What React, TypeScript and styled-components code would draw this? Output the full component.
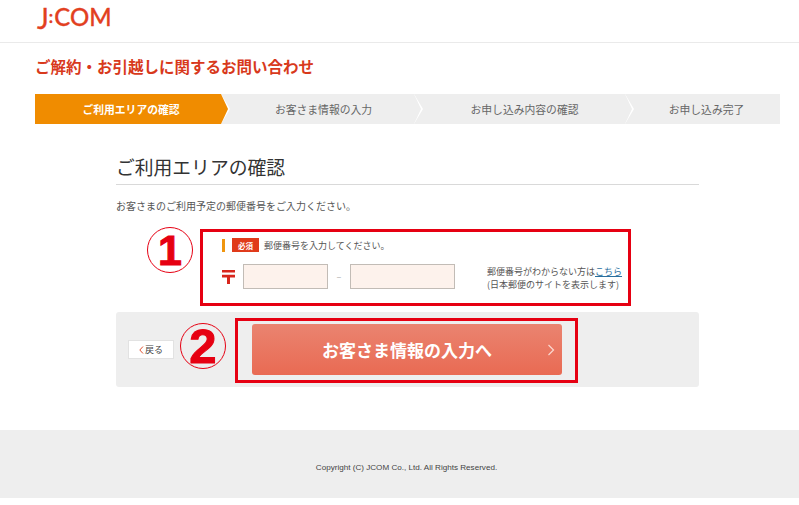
import React from 'react'
import styled, { createGlobalStyle } from 'styled-components'

const GlobalStyle = createGlobalStyle`
  html, body {
    margin: 0;
    padding: 0;
    background: #fff;
    font-family: "Noto Sans CJK JP", "Liberation Sans", sans-serif;
    color: #444;
  }
  * {
    box-sizing: border-box;
  }
`

const Header = styled.header`
  height: 43px;
  padding: 2px 0 0 37px;
  border-bottom: 1px solid #eaeaea;
`

const Logo = styled.div`
  display: flex;
  align-items: flex-start;
  height: 36px;
  color: #e2401f;
  font-family: "Lato", "Liberation Sans", sans-serif;
  font-size: 24px;
  line-height: 30px;
  -webkit-text-stroke: 0.3px #e2401f;
`

const LogoJ = styled.span`
  margin-top: 1px;
  font-size: 28px;
  font-weight: 400;
`

const LogoColon = styled.span`
  margin: 0 1px 0 0;
  font-size: 17px;
  font-weight: 700;
`

const LogoRest = styled.span`
  font-weight: 500;
`

const Title = styled.h1`
  margin: 12px 0 17px 35px;
  height: 22px;
  font-size: 15.5px;
  line-height: 22px;
  font-weight: 700;
  color: #d8391c;
`

const Steps = styled.ol`
  display: grid;
  grid-template-columns: 186px 193px 211px 155px;
  height: 30px;
  margin: 0 19px 0 35px;
  padding: 0;
  list-style: none;
`

const Step = styled.li<{ $active?: boolean; $last?: boolean; $inset: number }>`
  position: relative;
  display: flex;
  align-items: center;
  justify-content: center;
  padding-left: ${({ $inset }) => $inset}px;
  background: ${({ $active }) => ($active ? '#f08c00' : '#eeeeee')};
  color: ${({ $active }) => ($active ? '#fff' : '#666')};
  font-size: 10.8px;
  font-weight: ${({ $active }) => ($active ? 700 : 400)};

  ${({ $last, $active }) =>
    $last
      ? ''
      : `
  &::before {
    content: '';
    position: absolute;
    z-index: 1;
    top: 0;
    right: -9px;
    width: 9px;
    height: 100%;
    background: #fff;
    clip-path: polygon(0 0, 100% 50%, 0 100%);
  }
  &::after {
    content: '';
    position: absolute;
    z-index: 2;
    top: 0;
    right: -7px;
    width: 7px;
    height: 100%;
    background: ${$active ? '#f08c00' : '#eeeeee'};
    clip-path: polygon(0 0, 100% 50%, 0 100%);
  }
  `}
`

const Section = styled.main`
  width: 583px;
  margin: 28px 0 43px 116px;
`

const SectionHeading = styled.h2`
  margin: 0;
  height: 33px;
  border-bottom: 1px solid #d9d9d9;
  font-size: 18.8px;
  line-height: 30px;
  font-weight: 400;
  color: #333;
`

const Lead = styled.p`
  margin: 13px 0 15px 0;
  font-size: 10px;
  line-height: 16px;
  color: #555;
`

const FormRow = styled.div`
  position: relative;
  width: 431px;
  height: 77px;
  margin-left: 84px;
  padding: 6px 0 0 19px;
  border: 3px solid #e60012;
`

const Notice = styled.div`
  display: flex;
  align-items: center;
  height: 14px;
  font-size: 9px;
  color: #555;
`

const NoticeBar = styled.span`
  width: 3px;
  height: 13px;
  margin-right: 7px;
  background: #f0960f;
`

const Badge = styled.span`
  display: flex;
  align-items: center;
  justify-content: center;
  width: 27px;
  height: 14px;
  margin-right: 5px;
  background: #e03a1a;
  color: #fff;
  font-size: 7.5px;
  font-weight: 700;
`

const Fields = styled.div`
  display: flex;
  align-items: flex-start;
  margin-top: 12px;
`

const PostMark = styled.svg`
  width: 13px;
  height: 14px;
  margin: 6px 8px 0 0;
  flex: none;
`

const PostInput = styled.input<{ $wide?: boolean }>`
  flex: none;
  width: ${({ $wide }) => ($wide ? '105px' : '85px')};
  height: 25px;
  padding: 0 4px;
  border: 1px solid #c2bcb6;
  background: #fdf2ec;
  outline: none;
`

const Dash = styled.span`
  flex: none;
  width: 22px;
  text-align: center;
  font-size: 9px;
  line-height: 25px;
  color: #aaa;
`

const Help = styled.p`
  flex: none;
  margin: 1px 0 0 32px;
  font-size: 9px;
  line-height: 13px;
  color: #555;
  white-space: nowrap;
`

const HelpLink = styled.a`
  color: #2a6f9e;
  text-decoration: underline;
`

const Marker = styled.span`
  position: absolute;
  display: flex;
  align-items: center;
  justify-content: center;
  width: 46px;
  height: 46px;
  border: 1.5px solid #e60012;
  border-radius: 50%;
  color: #e60012;
  font-family: "Liberation Sans", sans-serif;
  font-weight: 700;
  line-height: 1;
  -webkit-text-stroke: 1px #e60012;
`

const FirstMarker = styled(Marker)`
  left: -56px;
  top: -5px;
  font-size: 43px;
`

const SecondMarker = styled(Marker)`
  left: 64px;
  top: 11px;
  font-size: 49px;
`

const ActionBar = styled.div`
  position: relative;
  display: flex;
  align-items: flex-start;
  height: 75px;
  margin-top: 6px;
  padding: 6px 0 0 12px;
  border-radius: 3px;
  background: #eeeeee;
`

const BackButton = styled.button`
  display: flex;
  align-items: center;
  justify-content: center;
  gap: 1px;
  width: 46px;
  height: 19px;
  margin-top: 22px;
  padding: 0;
  border: 1px solid #e2e2e2;
  background: #fff;
  color: #444;
  font-family: inherit;
  font-size: 9px;
`

const ActionFrame = styled.div`
  width: 343px;
  height: 65px;
  margin-left: 61px;
  padding: 3px 13px 5px 14px;
  border: 3px solid #e60012;
`

const NextButton = styled.button`
  position: relative;
  display: flex;
  align-items: center;
  justify-content: center;
  width: 100%;
  height: 100%;
  padding: 0;
  border: 0;
  border-radius: 3px;
  background: linear-gradient(#ea8470, #e96a53);
  color: #fff;
  font-family: inherit;
  font-size: 17px;
  font-weight: 700;
`

const NextArrow = styled.svg`
  position: absolute;
  right: 7px;
  top: 20px;
  width: 8px;
  height: 12px;
`

const Footer = styled.footer`
  display: flex;
  align-items: center;
  justify-content: center;
  height: 68px;
  margin-bottom: 7px;
  padding: 6px 0 0 14px;
  background: #eeeeee;
  color: #444;
  font-family: "Liberation Sans", sans-serif;
  font-size: 8.1px;
`

const steps = [
  { label: 'ご利用エリアの確認', inset: 6 },
  { label: 'お客さま情報の入力', inset: 12 },
  { label: 'お申し込み内容の確認', inset: 10 },
  { label: 'お申し込み完了', inset: 8 },
]

const App = () => {
  return (
    <>
      <GlobalStyle />
      <Header>
        <Logo>
          <LogoJ>J</LogoJ>
          <LogoColon>:</LogoColon>
          <LogoRest>COM</LogoRest>
        </Logo>
      </Header>
      <Title>ご解約・お引越しに関するお問い合わせ</Title>
      <Steps>
        {steps.map((step, i) => (
          <Step key={step.label} $active={i === 0} $last={i === steps.length - 1} $inset={step.inset}>
            {step.label}
          </Step>
        ))}
      </Steps>
      <Section>
        <SectionHeading>ご利用エリアの確認</SectionHeading>
        <Lead>お客さまのご利用予定の郵便番号をご入力ください。</Lead>
        <FormRow>
          <FirstMarker>1</FirstMarker>
          <Notice>
            <NoticeBar />
            <Badge>必須</Badge>
            郵便番号を入力してください。
          </Notice>
          <Fields>
            <PostMark viewBox="0 0 13 14">
              <path d="M0 0h13v2.6H0zM0 4.8h13v2.6H8V14H5V7.4H0z" fill="#d8261c" />
            </PostMark>
            <PostInput />
            <Dash>–</Dash>
            <PostInput $wide />
            <Help>
              郵便番号がわからない方は<HelpLink href="#">こちら</HelpLink>
              <br />
              (日本郵便のサイトを表示します)
            </Help>
          </Fields>
        </FormRow>
        <ActionBar>
          <BackButton>
            <svg width="5" height="8" viewBox="0 0 5 8">
              <path d="M4 .5.8 4 4 7.5" fill="none" stroke="#e0502f" strokeWidth="1" />
            </svg>
            戻る
          </BackButton>
          <SecondMarker>2</SecondMarker>
          <ActionFrame>
            <NextButton>
              お客さま情報の入力へ
              <NextArrow viewBox="0 0 8 12">
                <path d="M1.5 1 6.5 6 1.5 11" fill="none" stroke="#fbd9d0" strokeWidth="1.2" />
              </NextArrow>
            </NextButton>
          </ActionFrame>
        </ActionBar>
      </Section>
      <Footer>Copyright (C) JCOM Co., Ltd. All Rights Reserved.</Footer>
    </>
  )
}

export default App
